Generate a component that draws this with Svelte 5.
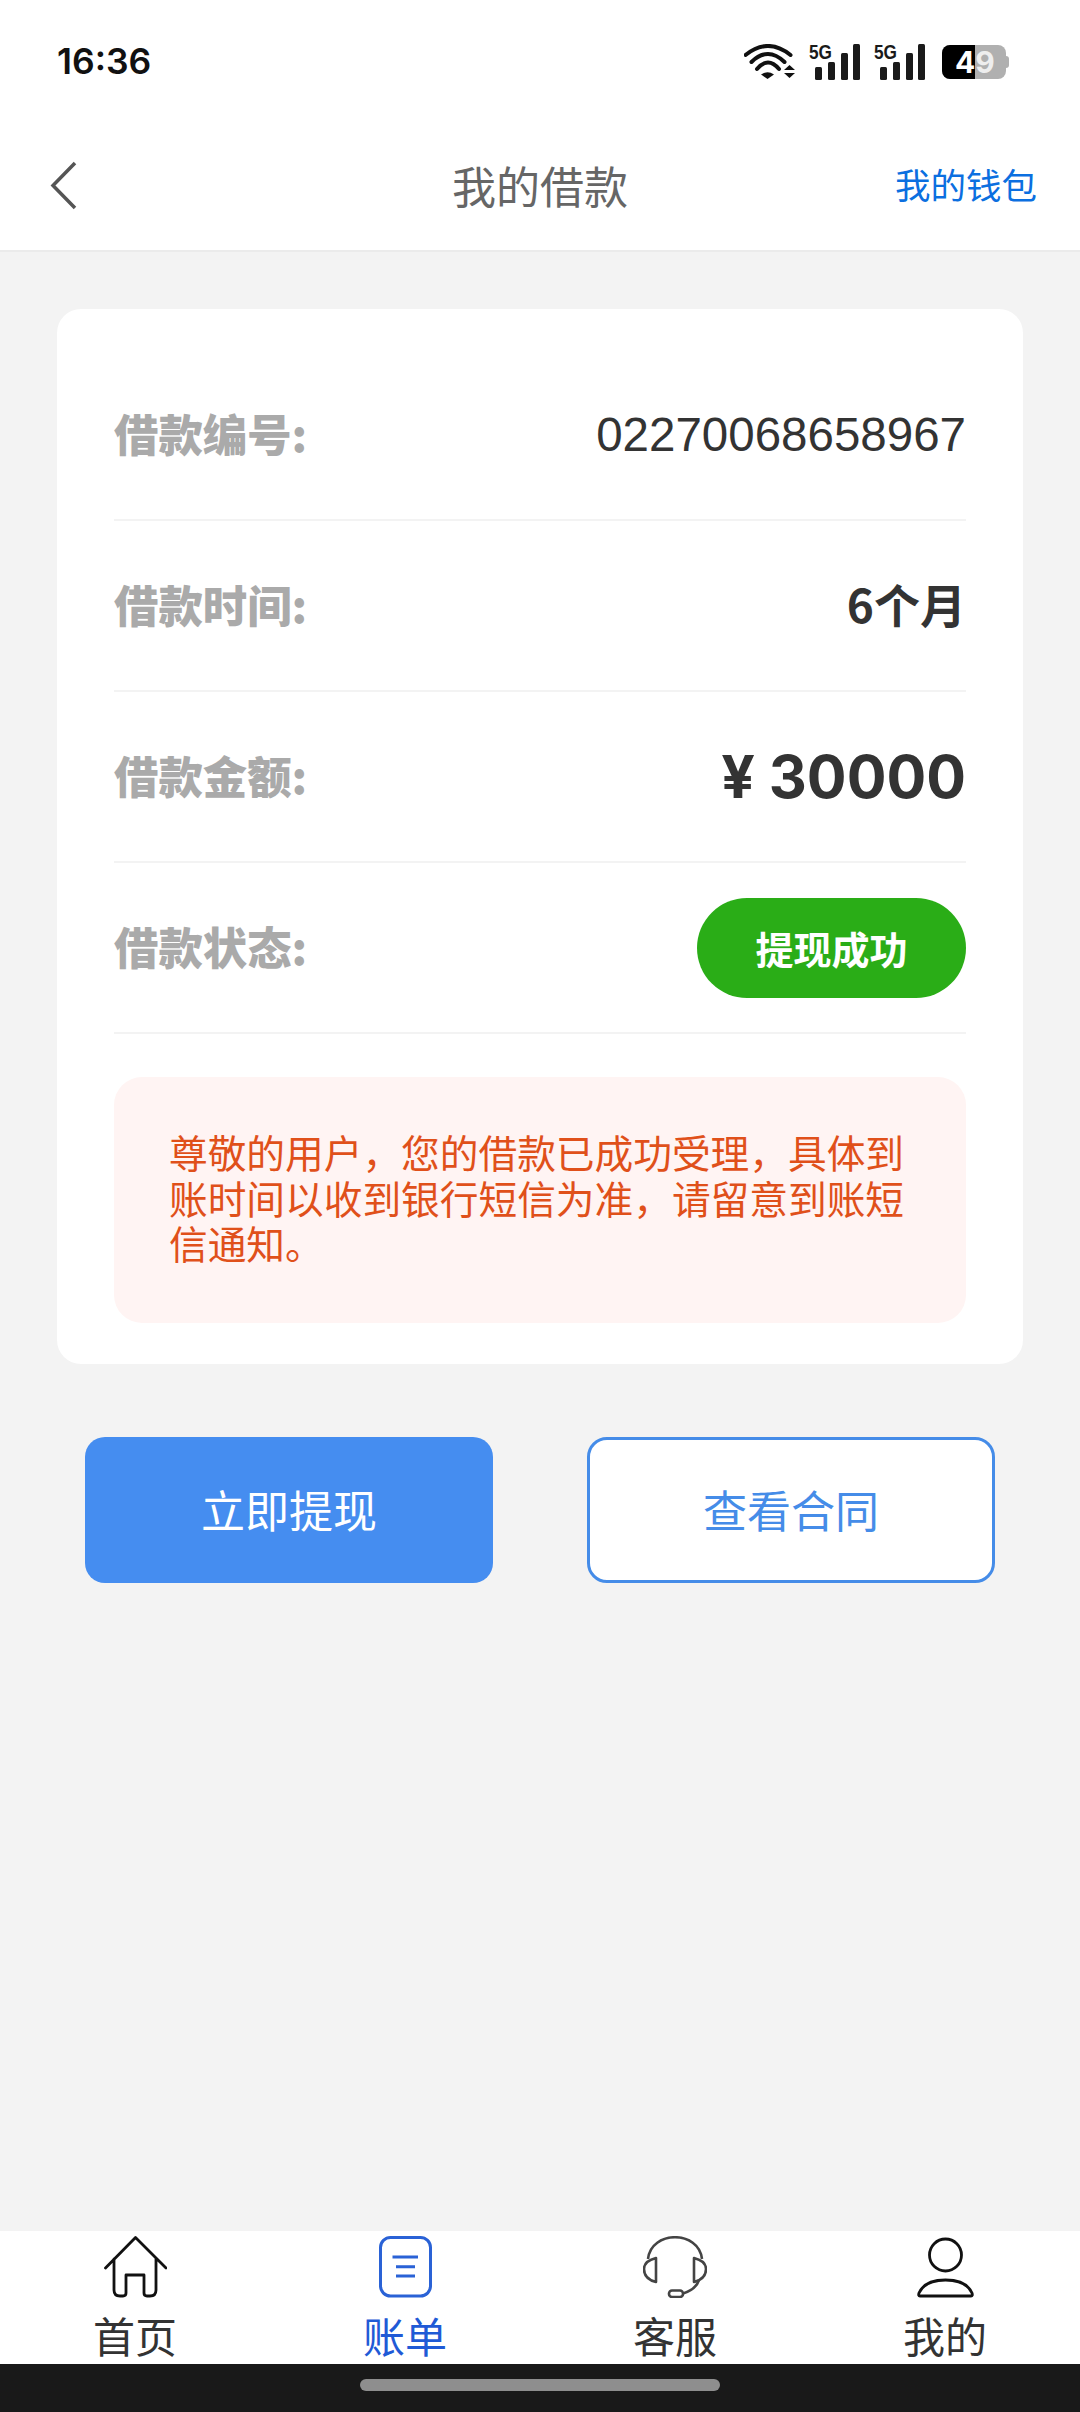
<script lang="ts">
  const rows = [
    { label: '借款编号:', value: '02270068658967', kind: 'num' },
    { label: '借款时间:', value: '6个月', kind: 'term' },
    { label: '借款金额:', value: '¥ 30000', kind: 'money' }
  ];
  const tabs = [
    { name: '首页', icon: 'home' },
    { name: '账单', icon: 'bill', active: true },
    { name: '客服', icon: 'service' },
    { name: '我的', icon: 'user' }
  ];
</script>

{#snippet signal()}
  <svg class="sig" width="51" height="36" viewBox="0 0 51 36">
    <rect x="6" y="23" width="7" height="13" rx="1.500" fill="#1a1a1a" />
    <rect x="19" y="18" width="7" height="18" rx="1.500" fill="#1a1a1a" />
    <rect x="32" y="9" width="7" height="27" rx="1.500" fill="#1a1a1a" />
    <rect x="44" y="0" width="7" height="36" rx="1.500" fill="#1a1a1a" />
    <text x="0" y="15" class="five-g" textLength="23" lengthAdjust="spacingAndGlyphs">5G</text>
  </svg>
{/snippet}

<div class="page">
  <div class="status">
    <span class="time">16:36</span>
    <div class="status-icons">
      <svg class="wifi" width="51" height="36" viewBox="0 0 51 36" fill="none">
        <path d="M1.500 11 Q24 -7 46.500 11" stroke="#111" stroke-width="4" stroke-linecap="round" />
        <path d="M7.500 18 Q24 2 40.500 18" stroke="#111" stroke-width="4" stroke-linecap="round" />
        <path d="M13 25 Q24 12 35 25" stroke="#111" stroke-width="4" stroke-linecap="round" />
        <path d="M23.500 35 L17 30.500 Q23.500 26 30 30.500 Z" fill="#111" />
        <path d="M45.500 21 L51 26 H40 Z M40 29 H51 L45.500 34 Z" fill="#111" />
      </svg>
      {@render signal()}
      {@render signal()}
      <div class="battery">
        <div class="batt-fill"></div>
        <span class="batt-num">4<span class="batt-light">9</span></span>
        <div class="batt-cap"></div>
      </div>
    </div>
  </div>

  <header class="nav">
    <svg class="back" width="30" height="50" viewBox="0 0 30 50">
      <path d="M26 2 L4 24.500 L26 47" fill="none" stroke="#555" stroke-width="3.500" />
    </svg>
    <h1>我的借款</h1>
    <span class="wallet">我的钱包</span>
  </header>

  <main class="body">
    <section class="card">
      {#each rows as row}
        <div class="row">
          <span class="label">{row.label}</span>
          <span class={row.kind}>{row.value}</span>
        </div>
      {/each}
      <div class="row">
        <span class="label">借款状态:</span>
        <span class="pill">提现成功</span>
      </div>
      <p class="notice">尊敬的用户，您的借款已成功受理，具体到账时间以收到银行短信为准，请留意到账短信通知。</p>
    </section>

    <div class="actions">
      <button class="btn primary">立即提现</button>
      <button class="btn outline">查看合同</button>
    </div>
  </main>

  <nav class="tabs">
    {#each tabs as tab}
      <div class="tab" class:active={tab.active}>
        <svg width="64" height="62" viewBox="0 0 64 62" fill="none">
          {#if tab.icon === 'home'}
            <path d="M2.500 32 L32.500 1.500 L63 32 M11 23 V54 Q11 60 17 60 H20 Q23 60 23 57 V39 H41 V57 Q41 60 44 60 H47 Q53 60 53 54 V23" stroke="#111" stroke-width="2.800" stroke-linejoin="round" stroke-linecap="round" />
          {:else if tab.icon === 'bill'}
            <rect x="7.500" y="1.500" width="50" height="58.500" rx="10" stroke="#2a62d6" stroke-width="3" />
            <path d="M19.500 21 H45 M23 30.700 H42 M23 40 H42" stroke="#2a62d6" stroke-width="3" />
          {:else if tab.icon === 'service'}
            <path d="M5 23 C8 -6 56 -6 59 23 M56 44 C54 50 48 55 40 57.500" stroke="#444" stroke-width="2.600" />
            <path d="M13 22 V46 Q1 43 1 33 Q1 25 13 22 Z M51 22 V46 Q63 43 63 33 Q63 25 51 22 Z" stroke="#444" stroke-width="2.600" stroke-linejoin="round" />
            <rect x="26" y="54.500" width="14" height="6.500" rx="3" stroke="#444" stroke-width="2.600" />
          {:else}
            <circle cx="32.500" cy="19" r="16" stroke="#111" stroke-width="2.800" />
            <path d="M7 60 H58 Q60 60 59 57 C55 48 45 44 32.500 44 C20 44 10 48 6 57 Q5 60 7 60 Z" stroke="#111" stroke-width="2.800" stroke-linejoin="round" />
          {/if}
        </svg>
        <span>{tab.name}</span>
      </div>
    {/each}
  </nav>

  <div class="gesture"><div class="handle"></div></div>
</div>

<style>
  :global(body) {
    margin: 0;
    background: #f3f3f3;
  }

  .page {
    width: 1080px;
    height: 2412px;
    display: flex;
    flex-direction: column;
    font-family: "Noto Sans CJK SC", "Liberation Sans", sans-serif;
    background: #f3f3f3;
  }

  .status {
    height: 122px;
    box-sizing: border-box;
    padding: 41px 74px 0 57px;
    display: flex;
    justify-content: space-between;
    align-items: flex-start;
    background: #fff;
  }

  .time {
    font-family: Inter, "Liberation Sans", sans-serif;
    font-size: 35.500px;
    font-weight: 600;
    line-height: 42px;
    color: #111;
  }

  .status-icons {
    display: flex;
    align-items: center;
    height: 42px;
    gap: 14px;
  }

  .sig {
    overflow: visible;
  }

  .battery {
    margin-left: 3px;
    position: relative;
    width: 64px;
    height: 34px;
    border-radius: 8px;
    background: #b0b0b0;
  }

  .five-g {
    font-family: "Liberation Sans", sans-serif;
    font-size: 20px;
    font-weight: 700;
    fill: #1a1a1a;
  }

  .batt-fill {
    position: absolute;
    left: 0;
    top: 0;
    bottom: 0;
    width: 33px;
    background: #000;
    border-radius: 8px 0 0 8px;
  }

  .batt-num {
    position: absolute;
    left: 13px;
    top: 0;
    font-family: Inter, "Liberation Sans", sans-serif;
    font-size: 30px;
    font-weight: 700;
    line-height: 34px;
    color: #fff;
  }

  .batt-light {
    color: #eee;
  }

  .batt-cap {
    position: absolute;
    right: -3px;
    top: 11px;
    width: 3px;
    height: 12px;
    background: #b0b0b0;
    border-radius: 0 3px 3px 0;
  }

  .nav {
    height: 128px;
    position: relative;
    display: flex;
    align-items: center;
    justify-content: center;
    background: #fff;
    border-bottom: 2px solid #ebebeb;
  }

  .back {
    position: absolute;
    left: 49px;
    top: 39px;
  }

  h1 {
    margin: 0 0 2px;
    font-size: 44px;
    font-weight: 400;
    color: #666;
  }

  .wallet {
    position: absolute;
    right: 43px;
    top: 36px;
    font-size: 35.500px;
    color: #0b6fe0;
  }

  .body {
    flex: 1;
    padding: 57px 57px 0;
  }

  .card {
    background: #fff;
    border-radius: 24px;
    padding: 41px 57px 41px;
  }

  .row {
    height: 171px;
    display: flex;
    justify-content: space-between;
    align-items: center;
    border-bottom: 2px solid #f3f3f3;
    box-sizing: border-box;
  }

  .label {
    margin-bottom: 4px;
    font-size: 44.400px;
    font-weight: 900;
    color: #aaa;
  }

  .num {
    font-family: "Liberation Sans", sans-serif;
    font-size: 47.500px;
    color: #333;
  }

  .term {
    margin-bottom: 6px;
    font-size: 46px;
    font-weight: 700;
    color: #333;
  }

  .money {
    font-family: Inter, "Liberation Sans", sans-serif;
    font-size: 59px;
    font-weight: 700;
    color: #333;
  }

  .pill {
    width: 269px;
    height: 100px;
    border-radius: 50px;
    background: #2aad17;
    color: #fff;
    font-size: 38px;
    font-weight: 700;
    display: flex;
    align-items: center;
    justify-content: center;
  }

  .notice {
    margin: 43px 0 0;
    height: 246px;
    box-sizing: border-box;
    padding: 52px 55px 0;
    background: #fff4f3;
    border-radius: 28px;
    color: #e0501a;
    font-size: 38.700px;
    line-height: 45.500px;
  }

  .actions {
    display: flex;
    justify-content: space-between;
    margin: 73px 28px 0;
  }

  .btn {
    width: 408px;
    height: 146px;
    box-sizing: border-box;
    border-radius: 20px;
    padding-bottom: 3px;
    font-family: inherit;
    font-size: 44px;
  }

  .primary {
    background: #458df0;
    border: none;
    color: #fff;
  }

  .outline {
    background: #fff;
    border: 3px solid #458ce8;
    color: #458ce8;
  }

  .tabs {
    height: 133px;
    background: #fff;
    display: grid;
    grid-template-columns: repeat(4, 270px);
  }

  .tab {
    display: flex;
    flex-direction: column;
    align-items: center;
    padding-top: 5px;
    font-size: 42px;
    line-height: 52px;
    color: #333;
  }

  .tab svg {
    margin-bottom: 11px;
  }

  .tab.active {
    color: #1f5ad6;
  }

  .gesture {
    height: 48px;
    background: #191919;
    display: flex;
    justify-content: center;
    padding-top: 15px;
    box-sizing: border-box;
  }

  .handle {
    width: 360px;
    height: 12px;
    border-radius: 6px;
    background: #8e8e8e;
  }
</style>
